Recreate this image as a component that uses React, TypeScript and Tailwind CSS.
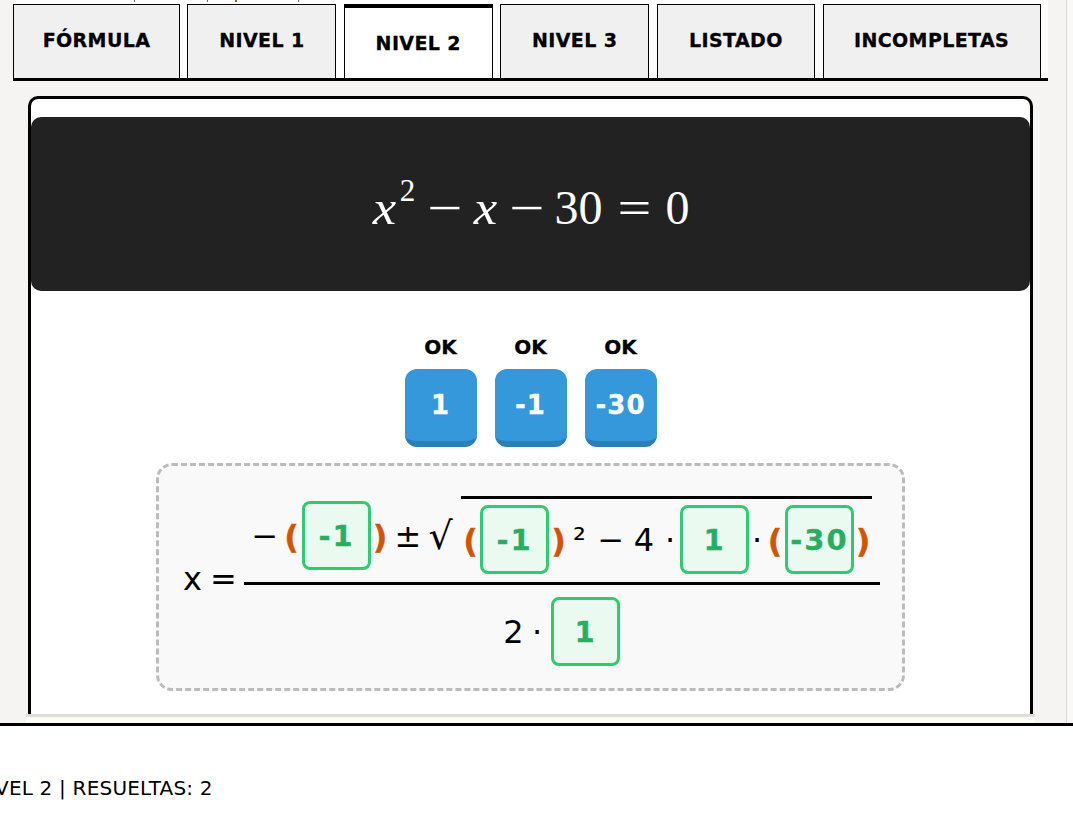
function Tab({ label, w, active }: { label: string; w: string; active?: boolean }) {
  if (active) {
    return (
      <div className={`${w} h-[74px] bg-white border-x border-black border-t-4 flex items-center justify-center text-[19px] tracking-[0.4px] font-bold [-webkit-text-stroke:0.3px]`}>
        {label}
      </div>
    );
  }
  return (
    <div className={`${w} h-[74px] bg-[#f0f0f0] border-x border-t border-black flex items-center justify-center text-[19px] tracking-[0.4px] font-bold [-webkit-text-stroke:0.3px] pb-[2px]`}>
      {label}
    </div>
  );
}

function Tile({ value }: { value: string }) {
  return (
    <div className="flex flex-col items-center w-[72px]">
      <div className="text-[20px] leading-[24px] font-bold [-webkit-text-stroke:0.3px] mb-[10px]">OK</div>
      <div className="w-[72px] h-[78px] rounded-[12px] bg-[#3498db] border-b-[6px] border-[#2980b9] text-white text-[26px] tracking-[1px] font-bold [-webkit-text-stroke:0.3px] flex items-center justify-center">
        {value}
      </div>
    </div>
  );
}

function Box({ value }: { value: string }) {
  return (
    <div className="w-[69px] h-[69px] shrink-0 rounded-[8px] border-[3px] border-[#2ecc71] bg-[#eafaf1] text-[#27ae60] text-[29px] tracking-[2px] font-bold [-webkit-text-stroke:0.3px] flex items-center justify-center pt-[2px]">
      {value}
    </div>
  );
}

function Paren({ c, w }: { c: string; w: string }) {
  return <span className={`${w} shrink-0 text-center text-[#d35400] text-[32px] font-bold [-webkit-text-stroke:0.3px] leading-none pt-[2px]`}>{c}</span>;
}

function Sym({ c, w, cls }: { c: string; w: string; cls?: string }) {
  return <span className={`${w} shrink-0 text-center leading-none ${cls ?? ""}`}>{c}</span>;
}

export default function App() {
  return (
    <div className="w-[1073px] h-[819px] overflow-hidden bg-white text-black font-['DejaVu_Sans',sans-serif]">
      <div className="h-[723px] bg-[#f5f4f2] w-[1073px] flex relative">
        {/* tails of the line of text scrolled off above the tabs */}
        <div className="absolute top-0 left-[134px] w-[1px] h-[2px] bg-[#8a5a4a]" />
        <div className="absolute top-0 left-[207px] w-[1px] h-[2px] bg-[#8a5a4a]" />
        <div className="absolute top-0 left-[235px] w-[2px] h-[2px] bg-[#8a5a4a]" />
        <div className="absolute top-0 left-[298px] w-[1px] h-[2px] bg-[#8a5a4a]" />
        <div className="w-[1066px] shrink-0">
          <div className="ml-[13px] w-[1035px] h-[81px] bg-white pt-[4px]">
            <div className="h-[77px] border-b-[3px] border-black flex gap-[7.4px]">
              <Tab label="FÓRMULA" w="w-[167px]" />
              <Tab label="NIVEL 1" w="w-[149px]" />
              <Tab label="NIVEL 2" w="w-[149px]" active />
              <Tab label="NIVEL 3" w="w-[149px]" />
              <Tab label="LISTADO" w="w-[158.6px]" />
              <Tab label="INCOMPLETAS" w="w-[218px]" />
            </div>
          </div>
          <div className="ml-[26px] mt-[15px] w-[1009px]">
            <div className="ml-[2px] w-[1005px] h-[618px] overflow-hidden bg-white border-[3px] border-b-0 border-black rounded-t-[10px] flex flex-col items-center">
              <div className="mt-[18px] w-[999px] h-[174px] shrink-0 bg-[#222222] rounded-[10px] text-white flex items-center justify-center pt-[8px] text-[48px] font-['Liberation_Serif',serif]">
                <Sym c="x" w="w-[25px]" cls="italic scale-x-110" />
                <sup className="text-[31px] -top-[17px] relative ml-[3px] w-[16px] text-center">2</sup>
                <Sym c="−" w="w-[57px]" cls="scale-x-[1.3]" />
                <Sym c="x" w="w-[25px]" cls="italic scale-x-110" />
                <Sym c="−" w="w-[57px]" cls="scale-x-[1.3]" />
                <span>30</span>
                <Sym c="=" w="w-[63px]" cls="scale-x-[1.25]" />
                <span>0</span>
              </div>
              <div className="mt-[44px] flex gap-[18px] shrink-0">
                <Tile value="1" />
                <Tile value="-1" />
                <Tile value="-30" />
              </div>
              <div className="mt-[16px] w-[749px] h-[228px] shrink-0 rounded-[16px] border-[3px] border-dashed border-[#bbbbbb] bg-[#f9f9f9] flex items-start pl-[24px] pt-[30px] text-[32px]">
                <span className="w-[61px] shrink-0 mt-[64px] leading-[38px] tracking-[-1px] whitespace-nowrap">x =</span>
                <div className="flex flex-col items-center w-[636px]">
                  <div className="w-full h-[89px] border-b-[3px] border-black flex items-start">
                    <div className="ml-[5px] mt-[5px] h-[69px] flex items-center">
                      <Sym c="−" w="w-[32px]" />
                      <Paren c="(" w="w-[21px]" />
                      <Box value="-1" />
                      <Paren c=")" w="w-[18px]" />
                      <Sym c="±" w="w-[38px]" />
                      <Sym c="√" w="w-[27px]" cls="text-[38px]" />
                    </div>
                    <div className="ml-[7px] w-[411px] h-[86px] border-t-[3px] border-black pt-[6px] flex items-start">
                      <div className="h-[69px] flex items-center">
                        <Paren c="(" w="w-[19px]" />
                        <Box value="-1" />
                        <Paren c=")" w="w-[19px]" />
                        <Sym c="²" w="w-[23px]" />
                        <Sym c="−" w="w-[40px]" />
                        <Sym c="4" w="w-[26px]" />
                        <Sym c="·" w="w-[23px]" cls="pl-[3px]" />
                        <Box value="1" />
                        <Sym c="·" w="w-[16px]" />
                        <Paren c="(" w="w-[20px]" />
                        <Box value="-30" />
                        <Paren c=")" w="w-[18px]" />
                      </div>
                    </div>
                  </div>
                  <div className="pt-[12px] pr-[4px] flex items-center">
                    <Sym c="2" w="w-[27px]" />
                    <Sym c="·" w="w-[24px]" cls="pr-[4px]" />
                    <Box value="1" />
                  </div>
                </div>
              </div>
            </div>
            <div className="h-[3px] bg-[#dddddd]" />
            <div className="h-[6px] bg-[#fffdf5]" />
          </div>
        </div>
        <div className="w-[1px] bg-[#d9d7d3]" />
        <div className="w-[6px] bg-[#f9f8f7]" />
      </div>
      <div className="h-[3px] bg-black" />
      <div className="pt-[50px] ml-[-5px] text-[20px] tracking-[0.2px] whitespace-nowrap leading-[24px]">VEL 2 | RESUELTAS: 2</div>
    </div>
  );
}
